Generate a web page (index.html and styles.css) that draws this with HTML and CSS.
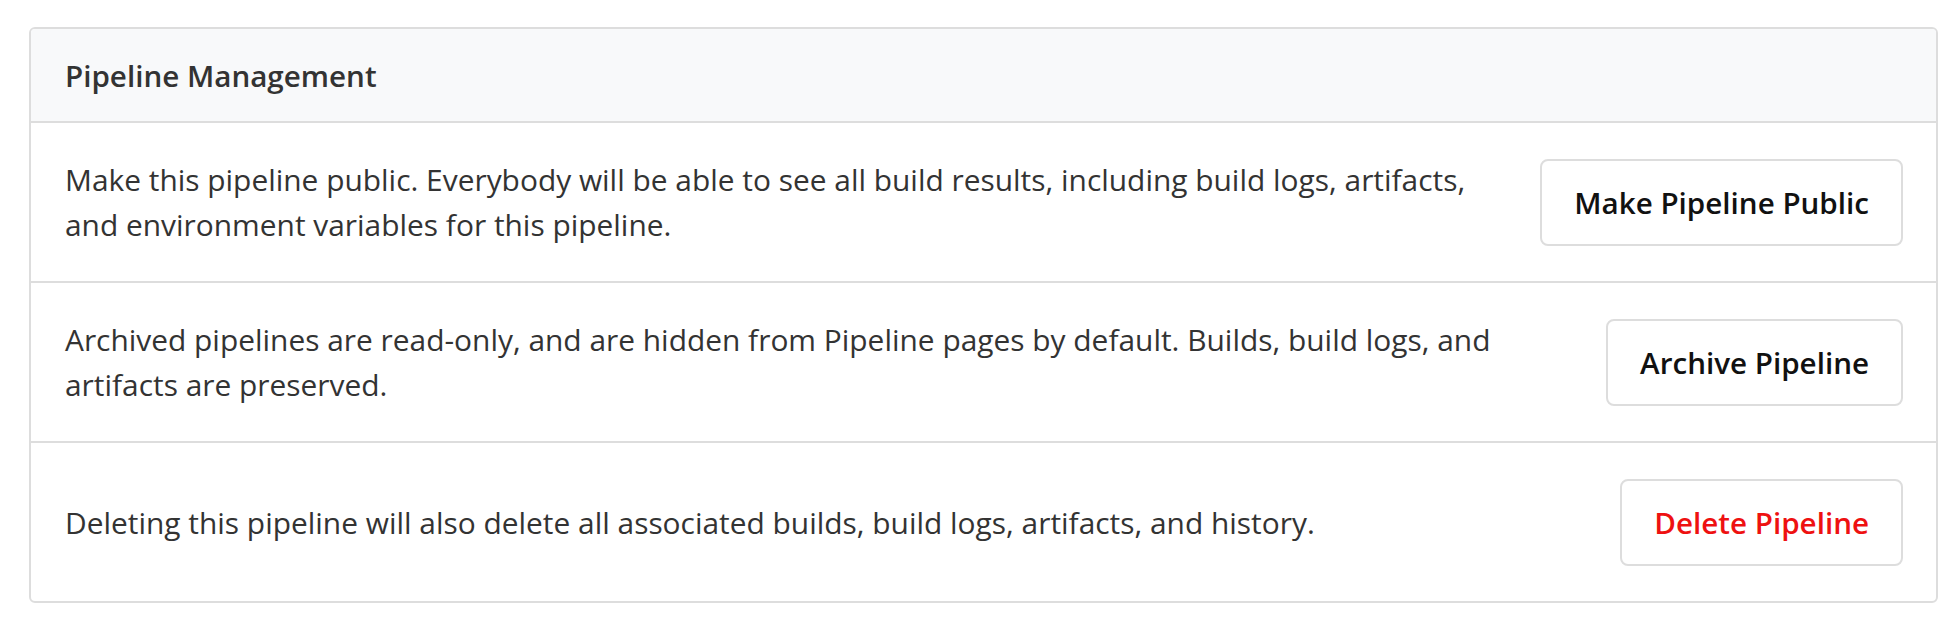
FILE: index.html
```html
<!DOCTYPE html>
<html lang="en">
<head>
<meta charset="utf-8">
<title>Pipeline Management</title>
<link rel="stylesheet" href="styles.css">
</head>
<body>
<div class="page">
  <section class="card">
    <header class="card-header">Pipeline Management</header>
    <div class="card-row">
      <p class="row-text">Make this pipeline public. Everybody will be able to see all build results, including build logs, artifacts, and environment variables for this pipeline.</p>
      <button class="btn" type="button">Make Pipeline Public</button>
    </div>
    <div class="card-row">
      <p class="row-text">Archived pipelines are read-only, and are hidden from Pipeline pages by default. Builds, build logs, and artifacts are preserved.</p>
      <button class="btn" type="button">Archive Pipeline</button>
    </div>
    <div class="card-row">
      <p class="row-text">Deleting this pipeline will also delete all associated builds, build logs, artifacts, and history.</p>
      <button class="btn btn-danger" type="button">Delete Pipeline</button>
    </div>
  </section>
</div>
</body>
</html>
```

FILE: styles.css
```css
* { box-sizing: border-box; }
html, body { margin: 0; padding: 0; background: #fff; }
body {
  font-family: "Open Sans", "Noto Sans", sans-serif;
  color: #333;
}
.page { padding: 27px 22px 0 29px; }
.card {
  border: 2px solid #dddddd;
  border-radius: 6px;
  overflow: hidden;
}
.card-header {
  background: #f8f9fa;
  border-bottom: 2px solid #dddddd;
  padding: 24px 34px 23px;
  font-size: 29.6px;
  line-height: 45px;
  font-weight: 600;
  color: #333;
}
.card-row {
  display: flex;
  align-items: center;
  gap: 48px;
  padding: 34px 33px 34px 34px;
  min-height: 160px;
  border-bottom: 2px solid #dddddd;
}
.card-row:last-child { border-bottom: none; min-height: 158px; }
.row-text {
  flex: 1;
  margin: 0;
  font-size: 29.9px;
  line-height: 45px;
  color: #333;
}
.btn {
  flex: none;
  font-family: inherit;
  font-size: 29.6px;
  font-weight: 600;
  color: #111;
  background: #fff;
  border: 2px solid #dddddd;
  border-radius: 8px;
  padding: 19px 32px;
  line-height: 45px;
}
.btn-danger { color: #ee1111; }
```
